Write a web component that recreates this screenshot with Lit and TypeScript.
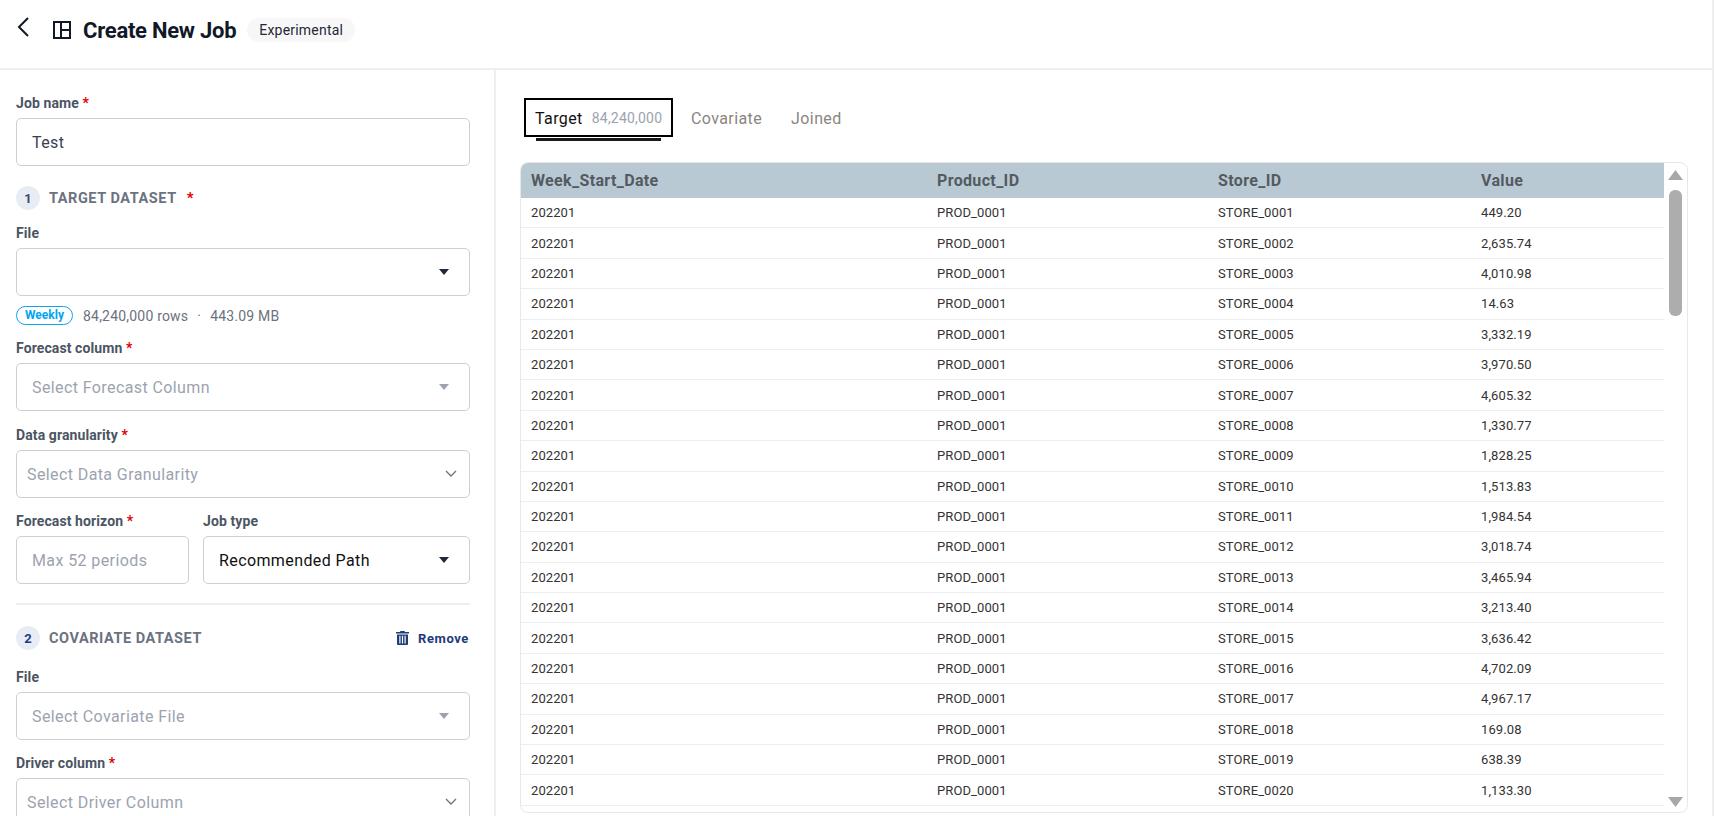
import { LitElement, html, css, svg } from 'lit';
import { customElement } from 'lit/decorators.js';

const VALUES = [
  '449.20', '2,635.74', '4,010.98', '14.63', '3,332.19', '3,970.50', '4,605.32', '1,330.77', '1,828.25', '1,513.83',
  '1,984.54', '3,018.74', '3,465.94', '3,213.40', '3,636.42', '4,702.09', '4,967.17', '169.08', '638.39', '1,133.30',
];

const caret = (muted = false) => html`<svg class="caret ${muted ? 'muted' : ''}" width="10" height="6" viewBox="0 0 10 6"><path d="M0 0h10L5 6z" /></svg>`;
const chevron = () => html`<svg class="chevron" width="12" height="8" viewBox="0 0 12 8"><path d="M1 1l5 5 5-5" /></svg>`;
const req = () => html`<span class="req">*</span>`;

@customElement('app-root')
export class AppRoot extends LitElement {
  static styles = css`
    :host {
      display: block;
      height: 816px;
      overflow: hidden;
      background: #fff;
      font-family: Roboto, "Liberation Sans", sans-serif;
      color: #1f2937;
    }
    .frame {
      width: 1714px;
      box-sizing: border-box;
      height: 816px;
      border-right: 2px solid #eeeeee;
      display: flex;
      flex-direction: column;
    }
    header {
      height: 70px;
      box-sizing: border-box;
      flex: none;
      border-bottom: 2px solid #eeeeee;
      display: flex;
      align-items: center;
      padding: 0 0 8px 17px;
    }
    .back { width: 12px; height: 20px; fill: none; stroke: #111827; stroke-width: 2; margin-right: 24px; margin-top: -6px; }
    .grid-icon { width: 18px; height: 18px; fill: none; stroke: #111827; stroke-width: 2; margin-right: 12px; }
    h1 { margin: 0; font-size: 22px; font-weight: 700; color: #111827; letter-spacing: -0.25px; }
    .chip {
      margin-left: 11px;
      height: 24px;
      padding: 0 12px;
      border-radius: 12px;
      background: #f7f7f8;
      font-size: 14px;
      line-height: 24px;
      letter-spacing: 0.2px;
    }
    .main { flex: 1; min-height: 0; display: flex; }
    aside {
      flex: none;
      border-right: 2px solid #eeeeee;
      padding: 23px 24px 0 16px;
      box-sizing: border-box;
      width: 496px;
      overflow: hidden;
    }
    label { display: block; height: 20px; line-height: 20px; font-size: 14px; font-weight: 700; color: #4b5563; margin-bottom: 5px; white-space: nowrap; letter-spacing: 0.1px; }
    .req { color: #e00000; font-weight: 700; }
    .control {
      height: 48px;
      box-sizing: border-box;
      border: 1px solid #cfcfcf;
      border-radius: 5px;
      display: flex;
      align-items: center;
      justify-content: space-between;
      padding: 0 20px 0 15px;
      font-size: 16px;
      letter-spacing: 0.4px;
      color: #374151;
      background: #fff;
    }
    .control.ph { color: #9ca3af; }
    .control.native { padding: 0 12px 0 10px; }
    .control.dark { color: #111; padding-left: 15px; }
    .caret { fill: #1f2937; flex: none; margin-left: auto; }
    .caret.muted { fill: #9ca3af; }
    .chevron { fill: none; stroke: #6b7280; stroke-width: 1.3; flex: none; }
    .field { margin-top: 13px; }
    .field.gap14 { margin-top: 14px; }
    .section {
      display: flex;
      align-items: center;
      height: 24px;
      margin-top: 20px;
      font-size: 14.5px;
      font-weight: 700;
      color: #6b7280;
      letter-spacing: 0.55px;
    }
    .section .req { margin-left: 10px; font-size: 15px; }
    .num {
      width: 24px;
      height: 24px;
      border-radius: 50%;
      background: #e8ecf4;
      color: #374a6b;
      font-size: 13px;
      font-weight: 700;
      letter-spacing: 0;
      display: flex;
      align-items: center;
      justify-content: center;
      margin-right: 9px;
    }
    .num.navy { color: #1e3a8a; }
    .remove {
      margin-left: auto;
      display: flex;
      align-items: center;
      gap: 9px;
      padding-right: 1px;
      color: #1e3a7b;
      font-size: 13px;
      letter-spacing: 0.6px;
    }
    .remove svg { width: 13px; height: 14px; fill: #1e3a7b; }
    .meta { display: flex; align-items: center; height: 19px; margin-top: 10px; font-size: 14px; color: #6b7280; letter-spacing: 0.2px; }
    .pill {
      box-sizing: border-box;
      width: 57px;
      height: 19px;
      border: 1px solid #0ea5e9;
      border-radius: 10px;
      color: #00a6f0;
      font-size: 12px;
      font-weight: 700;
      line-height: 16px;
      text-align: center;
      letter-spacing: 0;
      margin-right: 10px;
    }
    .dot { margin: 0 9px; }
    .split { display: grid; grid-template-columns: 173px 267px; column-gap: 14px; }
    .divider { height: 2px; background: #eeeeee; margin-top: 19px; }
    .section.second { margin-top: 21px; }
    .field.after { margin-top: 17px; }

    .content { flex: 1; min-width: 0; padding: 28px 0 0 24px; }
    .tabs { display: flex; align-items: center; height: 39px; padding-left: 4px; font-size: 16px; letter-spacing: 0.4px; color: #8a8580; }
    .tabs > span { padding-top: 2px; }
    .tab-active {
      position: relative;
      box-sizing: border-box;
      width: 149px;
      height: 39px;
      border: 2px solid #000;
      display: flex;
      align-items: center;
      padding: 1px 0 0 9px;
      color: #111;
      margin-right: 18px;
    }
    .tab-active::after {
      content: '';
      position: absolute;
      left: 10px;
      right: 10px;
      bottom: -6px;
      height: 3px;
      background: #1a1a1a;
    }
    .count { margin-left: 9px; font-size: 14px; letter-spacing: 0.2px; color: #9ca3af; }
    .tab-joined { margin-left: 29px; }
    .table-wrap {
      box-sizing: border-box;
      margin-top: 25px;
      width: 1168px;
      height: 651px;
      border: 1px solid #e8e8e8;
      border-radius: 8px;
      display: flex;
      overflow: hidden;
    }
    .table { flex: 1; min-width: 0; }
    .row {
      display: grid;
      grid-template-columns: 406px 281px 263px 1fr;
      height: 30.4px;
      box-sizing: border-box;
      border-bottom: 1px solid #eeeeee;
      align-items: center;
      font-size: 13px;
      color: #333;
      letter-spacing: 0.1px;
    }
    .row > div { padding-left: 10px; }
    .row.head {
      height: 35px;
      background: #b9c9d4;
      border-bottom: none;
      font-size: 16px;
      font-weight: 700;
      color: #535b61;
      letter-spacing: 0.35px;
    }
    .scrollbar {
      width: 23px;
      flex: none;
      display: flex;
      flex-direction: column;
      align-items: center;
      padding-top: 7px;
      box-sizing: border-box;
    }
    .scrollbar svg { width: 15px; height: 10px; fill: #a8a8a8; flex: none; }
    .thumb { width: 13px; height: 126px; border-radius: 6px; background: #adadad; margin-top: 10px; }
    .scrollbar .down { margin-top: auto; margin-bottom: 5px; }
  `;

  render() {
    return html`
      <div class="frame">
        <header>
          <svg class="back" viewBox="0 0 12 20"><path d="M11 1L2 10l9 9" /></svg>
          <svg class="grid-icon" viewBox="0 0 18 18"><path d="M1 1h16v16H1zM8 1v16M8 9h9" /></svg>
          <h1>Create New Job</h1>
          <span class="chip">Experimental</span>
        </header>
        <div class="main">
          <aside>
            <label>Job name ${req()}</label>
            <div class="control">Test</div>

            <div class="section"><span class="num">1</span>TARGET DATASET<span class="req">*</span></div>
            <div class="field">
              <label>File</label>
              <div class="control">${caret()}</div>
            </div>
            <div class="meta"><span class="pill">Weekly</span>84,240,000 rows<span class="dot">·</span>443.09 MB</div>
            <div class="field">
              <label>Forecast column ${req()}</label>
              <div class="control ph">Select Forecast Column ${caret(true)}</div>
            </div>
            <div class="field gap14">
              <label>Data granularity ${req()}</label>
              <div class="control ph native">Select Data Granularity ${chevron()}</div>
            </div>
            <div class="split field">
              <div>
                <label>Forecast horizon ${req()}</label>
                <div class="control ph">Max 52 periods</div>
              </div>
              <div>
                <label>Job type</label>
                <div class="control dark">Recommended Path ${caret()}</div>
              </div>
            </div>
            <div class="divider"></div>

            <div class="section second">
              <span class="num navy">2</span>COVARIATE DATASET
              <span class="remove">
                <svg viewBox="0 0 13 14">${svg`<path d="M4.5 0h4l.6 1H13v1.6H0V1h3.9zM1 3.4h11V13a1 1 0 0 1-1 1H2a1 1 0 0 1-1-1zm2.3 1.4v7.6h1.2V4.8zm2.6 0v7.6h1.2V4.8zm2.6 0v7.6h1.2V4.8z" fill-rule="evenodd" />`}</svg>
                Remove
              </span>
            </div>
            <div class="field after">
              <label>File</label>
              <div class="control ph">Select Covariate File ${caret(true)}</div>
            </div>
            <div class="field">
              <label>Driver column ${req()}</label>
              <div class="control ph native">Select Driver Column ${chevron()}</div>
            </div>
          </aside>

          <section class="content">
            <div class="tabs">
              <div class="tab-active">Target<span class="count">84,240,000</span></div>
              <span>Covariate</span>
              <span class="tab-joined">Joined</span>
            </div>
            <div class="table-wrap">
              <div class="table">
                <div class="row head">
                  <div>Week_Start_Date</div><div>Product_ID</div><div>Store_ID</div><div>Value</div>
                </div>
                ${VALUES.map((v, i) => html`
                  <div class="row">
                    <div>202201</div>
                    <div>PROD_0001</div>
                    <div>STORE_${String(i + 1).padStart(4, '0')}</div>
                    <div>${v}</div>
                  </div>
                `)}
              </div>
              <div class="scrollbar">
                <svg viewBox="0 0 15 10"><path d="M7.5 0L15 10H0z" /></svg>
                <div class="thumb"></div>
                <svg class="down" viewBox="0 0 15 10"><path d="M0 0h15L7.5 10z" /></svg>
              </div>
            </div>
          </section>
        </div>
      </div>
    `;
  }
}
